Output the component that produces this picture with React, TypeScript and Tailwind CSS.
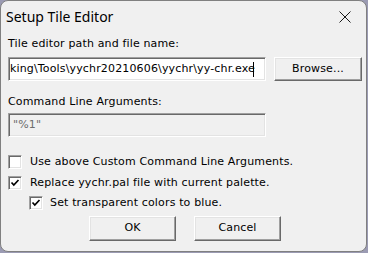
import React from "react";

const sunken =
  "border border-t-[#a0a0a0] border-l-[#a0a0a0] border-r-white border-b-white shadow-[inset_1px_1px_0_#696969,inset_-1px_-1px_0_#e3e3e3]";
const raised =
  "border border-t-white border-l-white border-r-[#696969] border-b-[#696969] shadow-[inset_-1px_-1px_0_#a0a0a0,inset_1px_1px_0_#e3e3e3] bg-[#f0f0f0]";

function Check({ checked }: { checked: boolean }) {
  return (
    <div className={`w-[14px] h-[14px] bg-white shrink-0 flex items-center justify-center ${sunken}`}>
      {checked && (
        <svg width="10" height="10" viewBox="0 0 10 10">
          <polyline points="1.5,4.5 3.8,7 8.5,2" fill="none" stroke="#000" strokeWidth="1.7" />
        </svg>
      )}
    </div>
  );
}

export default function App() {
  return (
    <div className="w-[368px] h-[253px] bg-[#9b9bb3] font-['DejaVu_Sans',sans-serif] text-[11px] text-black tracking-[0.15px]">
      <div className="w-[367px] h-[252px] rounded-[8px] border border-[#808080] bg-[#f0f0f0] flex flex-col overflow-hidden">
        <div className="h-[31px] flex items-center justify-between pl-[5px] pr-[15px] shrink-0">
          <span className="font-['Noto_Sans',sans-serif] text-[14px] tracking-normal">Setup Tile Editor</span>
          <svg width="12" height="12" viewBox="0 0 12 12">
            <path d="M0.5 0.5 L11.5 11.5 M11.5 0.5 L0.5 11.5" stroke="#1a1a1a" strokeWidth="1" />
          </svg>
        </div>
        <div className="flex flex-col pl-[7px]">
          <div className="mt-[5px] h-[13px] leading-[13px]">Tile editor path and file name:</div>
          <div className="mt-[7px] flex items-center">
            <div className={`w-[258px] h-[24px] bg-white overflow-hidden flex items-center pl-[1px] ${sunken}`}>
              <span className="whitespace-nowrap shrink-0">king\Tools\yychr20210606\yychr\yy-chr.exe</span>
              <span className="w-px h-[15px] bg-black shrink-0 -ml-[2px]" />
            </div>
            <button className={`ml-[8px] w-[88px] h-[24px] flex items-center justify-center ${raised}`}>
              Browse...
            </button>
          </div>
          <div className="mt-[14px] h-[13px] leading-[13px]">Command Line Arguments:</div>
          <div className={`mt-[5px] w-[258px] h-[24px] flex items-center pl-[4px] text-[#6d6d6d] ${sunken}`}>
            "%1"
          </div>
          <div className="mt-[18px] flex items-center h-[14px]">
            <Check checked={false} />
            <span className="ml-[8px]">Use above Custom Command Line Arguments.</span>
          </div>
          <div className="mt-[7px] flex items-center h-[14px]">
            <Check checked={true} />
            <span className="ml-[8px]">Replace yychr.pal file with current palette.</span>
          </div>
          <div className="mt-[6px] flex items-center h-[14px] pl-[21px]">
            <Check checked={true} />
            <span className="ml-[7px]">Set transparent colors to blue.</span>
          </div>
          <div className="mt-[6px] flex pl-[81px] gap-[18px]">
            <button className={`w-[87px] h-[25px] flex items-center justify-center ${raised}`}>OK</button>
            <button className={`w-[87px] h-[25px] flex items-center justify-center ${raised}`}>Cancel</button>
          </div>
        </div>
      </div>
    </div>
  );
}
